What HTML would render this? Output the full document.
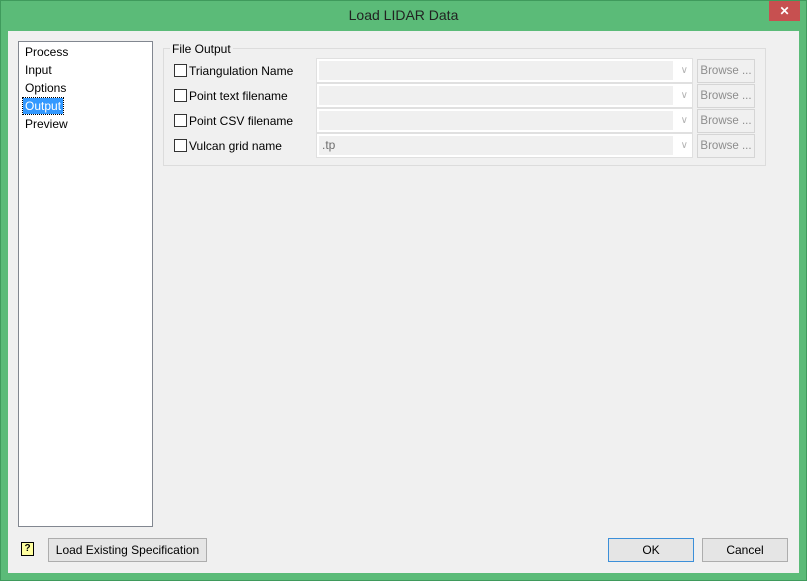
<!DOCTYPE html>
<html><head><style>
*{box-sizing:border-box;margin:0;padding:0}
body{width:807px;height:581px;background:#5bbb78;font-family:"Liberation Sans",sans-serif;font-size:12px;color:#000;position:relative;overflow:hidden}
.abs{position:absolute}
#frame{left:0;top:0;width:807px;height:581px;border:1px solid #3f9a5c}
#title{left:0;top:7px;width:807px;text-align:center;font-size:14px;color:#222}
#close{left:769px;top:1px;width:31px;height:20px;background:#c75050;color:#fff;text-align:center;font-size:12px;line-height:20px;font-weight:bold}
#client{left:8px;top:31px;width:791px;height:542px;background:#f0f0f0}
#list{left:18px;top:41px;width:135px;height:486px;background:#fff;border:1px solid #828790}
.li{position:absolute;left:6px;height:16px;line-height:16px}
#group{left:163px;top:48px;width:603px;height:118px;border:1px solid #dcdcdc}
#glabel{left:170px;top:42px;background:#f0f0f0;padding:0 2px}
.cb{position:absolute;left:174px;width:13px;height:13px;border:1px solid #333;background:#fff}
.cl{position:absolute;left:189px}
.combo{position:absolute;left:316px;width:377px;height:25px;background:#fff;border:1px solid #e0e0e0}
.combo .in{position:absolute;left:2px;top:2px;width:354px;height:19px;background:#f0f0f0;color:#6d6d6d;padding-left:3px;line-height:19px}
.combo .ar{position:absolute;right:4px;top:6px;color:#b4b4b4;font-size:10px}
.br{position:absolute;left:697px;width:58px;height:24px;border:1px solid #d5d5d5;background:#f0f0f0;color:#8d8d8d;text-align:center;line-height:22px;font-size:11.5px}
.btn{position:absolute;top:538px;height:24px;border:1px solid #adadad;background:#e5e5e5;text-align:center;line-height:22px}
</style></head><body>
<div class="abs" id="frame"></div>
<div class="abs" id="title">Load LIDAR Data</div>
<div class="abs" id="close">✕</div>
<div class="abs" id="client"></div>
<div class="abs" id="list">
<div class="li" style="top:2px">Process</div>
<div class="li" style="top:20px">Input</div>
<div class="li" style="top:38px">Options</div>
<div class="li" style="top:56px;left:4px;padding:0 2px;background:#3399ff;color:#fff;outline:1px dotted #000">Output</div>
<div class="li" style="top:74px">Preview</div>
</div>
<div class="abs" id="group"></div>
<div class="abs" id="glabel">File Output</div>

<div class="cb" style="top:64px"></div><div class="cl" style="top:64px">Triangulation Name</div>
<div class="cb" style="top:89px"></div><div class="cl" style="top:89px">Point text filename</div>
<div class="cb" style="top:114px"></div><div class="cl" style="top:114px">Point CSV filename</div>
<div class="cb" style="top:139px"></div><div class="cl" style="top:139px">Vulcan grid name</div>

<div class="combo" style="top:58px"><div class="in"></div><div class="ar">∨</div></div>
<div class="combo" style="top:83px"><div class="in"></div><div class="ar">∨</div></div>
<div class="combo" style="top:108px"><div class="in"></div><div class="ar">∨</div></div>
<div class="combo" style="top:133px"><div class="in">.tp</div><div class="ar">∨</div></div>

<div class="br" style="top:59px">Browse ...</div>
<div class="br" style="top:84px">Browse ...</div>
<div class="br" style="top:109px">Browse ...</div>
<div class="br" style="top:134px">Browse ...</div>

<div class="abs" style="left:21px;top:542px;width:13px;height:14px;background:#ffffa0;border:1px solid #000;font-size:10px;font-weight:bold;text-align:center;line-height:12px">?</div>
<div class="btn" style="left:48px;width:159px">Load Existing Specification</div>
<div class="btn" style="left:608px;width:86px;border-color:#3c8fd9">OK</div>
<div class="btn" style="left:702px;width:86px">Cancel</div>
</body></html>
